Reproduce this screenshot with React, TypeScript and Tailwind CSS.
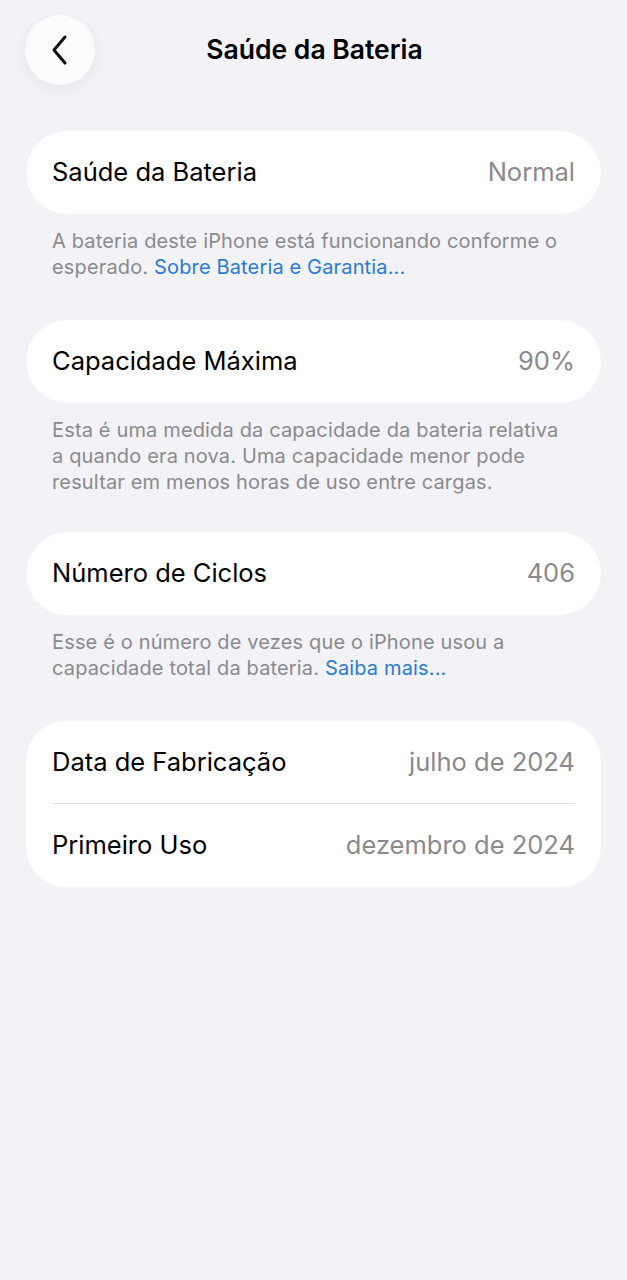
import * as React from 'react';

function Row({ label, value, divider }: { label: string; value: string; divider?: boolean }) {
  return (
    <div className="relative flex h-[83px] items-center justify-between px-[26px]">
      <span className="text-[25.5px] text-black">{label}</span>
      <span className="text-[25.5px] text-[#8a8a8e]">{value}</span>
      {divider && <div className="absolute bottom-0 left-[26px] right-[26px] h-px bg-[#e2e2e6]"></div>}
    </div>
  );
}

function Footer({ children }: { children: React.ReactNode }) {
  return (
    <p className="px-[26px] pt-[14px] text-[20px] leading-[26px] tracking-[0.15px] text-[#8a8a8e]">{children}</p>
  );
}

export default function App() {
  return (
    <div className="min-h-screen bg-[#f2f2f7] font-['Inter',sans-serif]">
      <div className="relative flex h-[100px] items-center justify-center">
        <button className="absolute left-[25px] top-[15px] flex h-[70px] w-[70px] items-center justify-center rounded-full bg-[#fbfbfd] shadow-[0_4px_16px_rgba(0,0,0,0.06)]">
          <svg width="24" height="32" viewBox="0 0 24 32" fill="none">
            <path d="M17 3 L6 16 L17 29" stroke="#111" strokeWidth="3" strokeLinecap="round" strokeLinejoin="round" />
          </svg>
        </button>
        <h1 className="pl-[2px] text-[26.5px] font-semibold text-black">Saúde da Bateria</h1>
      </div>

      <div className="px-[26px] pt-[31px]">
        <div className="rounded-[42px] bg-white">
          <Row label="Saúde da Bateria" value="Normal" />
        </div>
        <Footer>
          A bateria deste iPhone está funcionando conforme o esperado.{' '}
          <span className="text-[#2a7bd4]">Sobre Bateria e Garantia...</span>
        </Footer>

        <div className="mt-[40px] rounded-[42px] bg-white">
          <Row label="Capacidade Máxima" value="90%" />
        </div>
        <Footer>
          Esta é uma medida da capacidade da bateria relativa a quando era nova. Uma capacidade menor pode resultar em menos horas de uso entre cargas.
        </Footer>

        <div className="mt-[37px] rounded-[42px] bg-white">
          <Row label="Número de Ciclos" value="406" />
        </div>
        <Footer>
          Esse é o número de vezes que o iPhone usou a capacidade total da bateria.{' '}
          <span className="text-[#2a7bd4]">Saiba mais...</span>
        </Footer>

        <div className="mt-[40px] rounded-[40px] bg-white">
          <Row label="Data de Fabricação" value="julho de 2024" divider />
          <Row label="Primeiro Uso" value="dezembro de 2024" />
        </div>
      </div>
    </div>
  );
}
